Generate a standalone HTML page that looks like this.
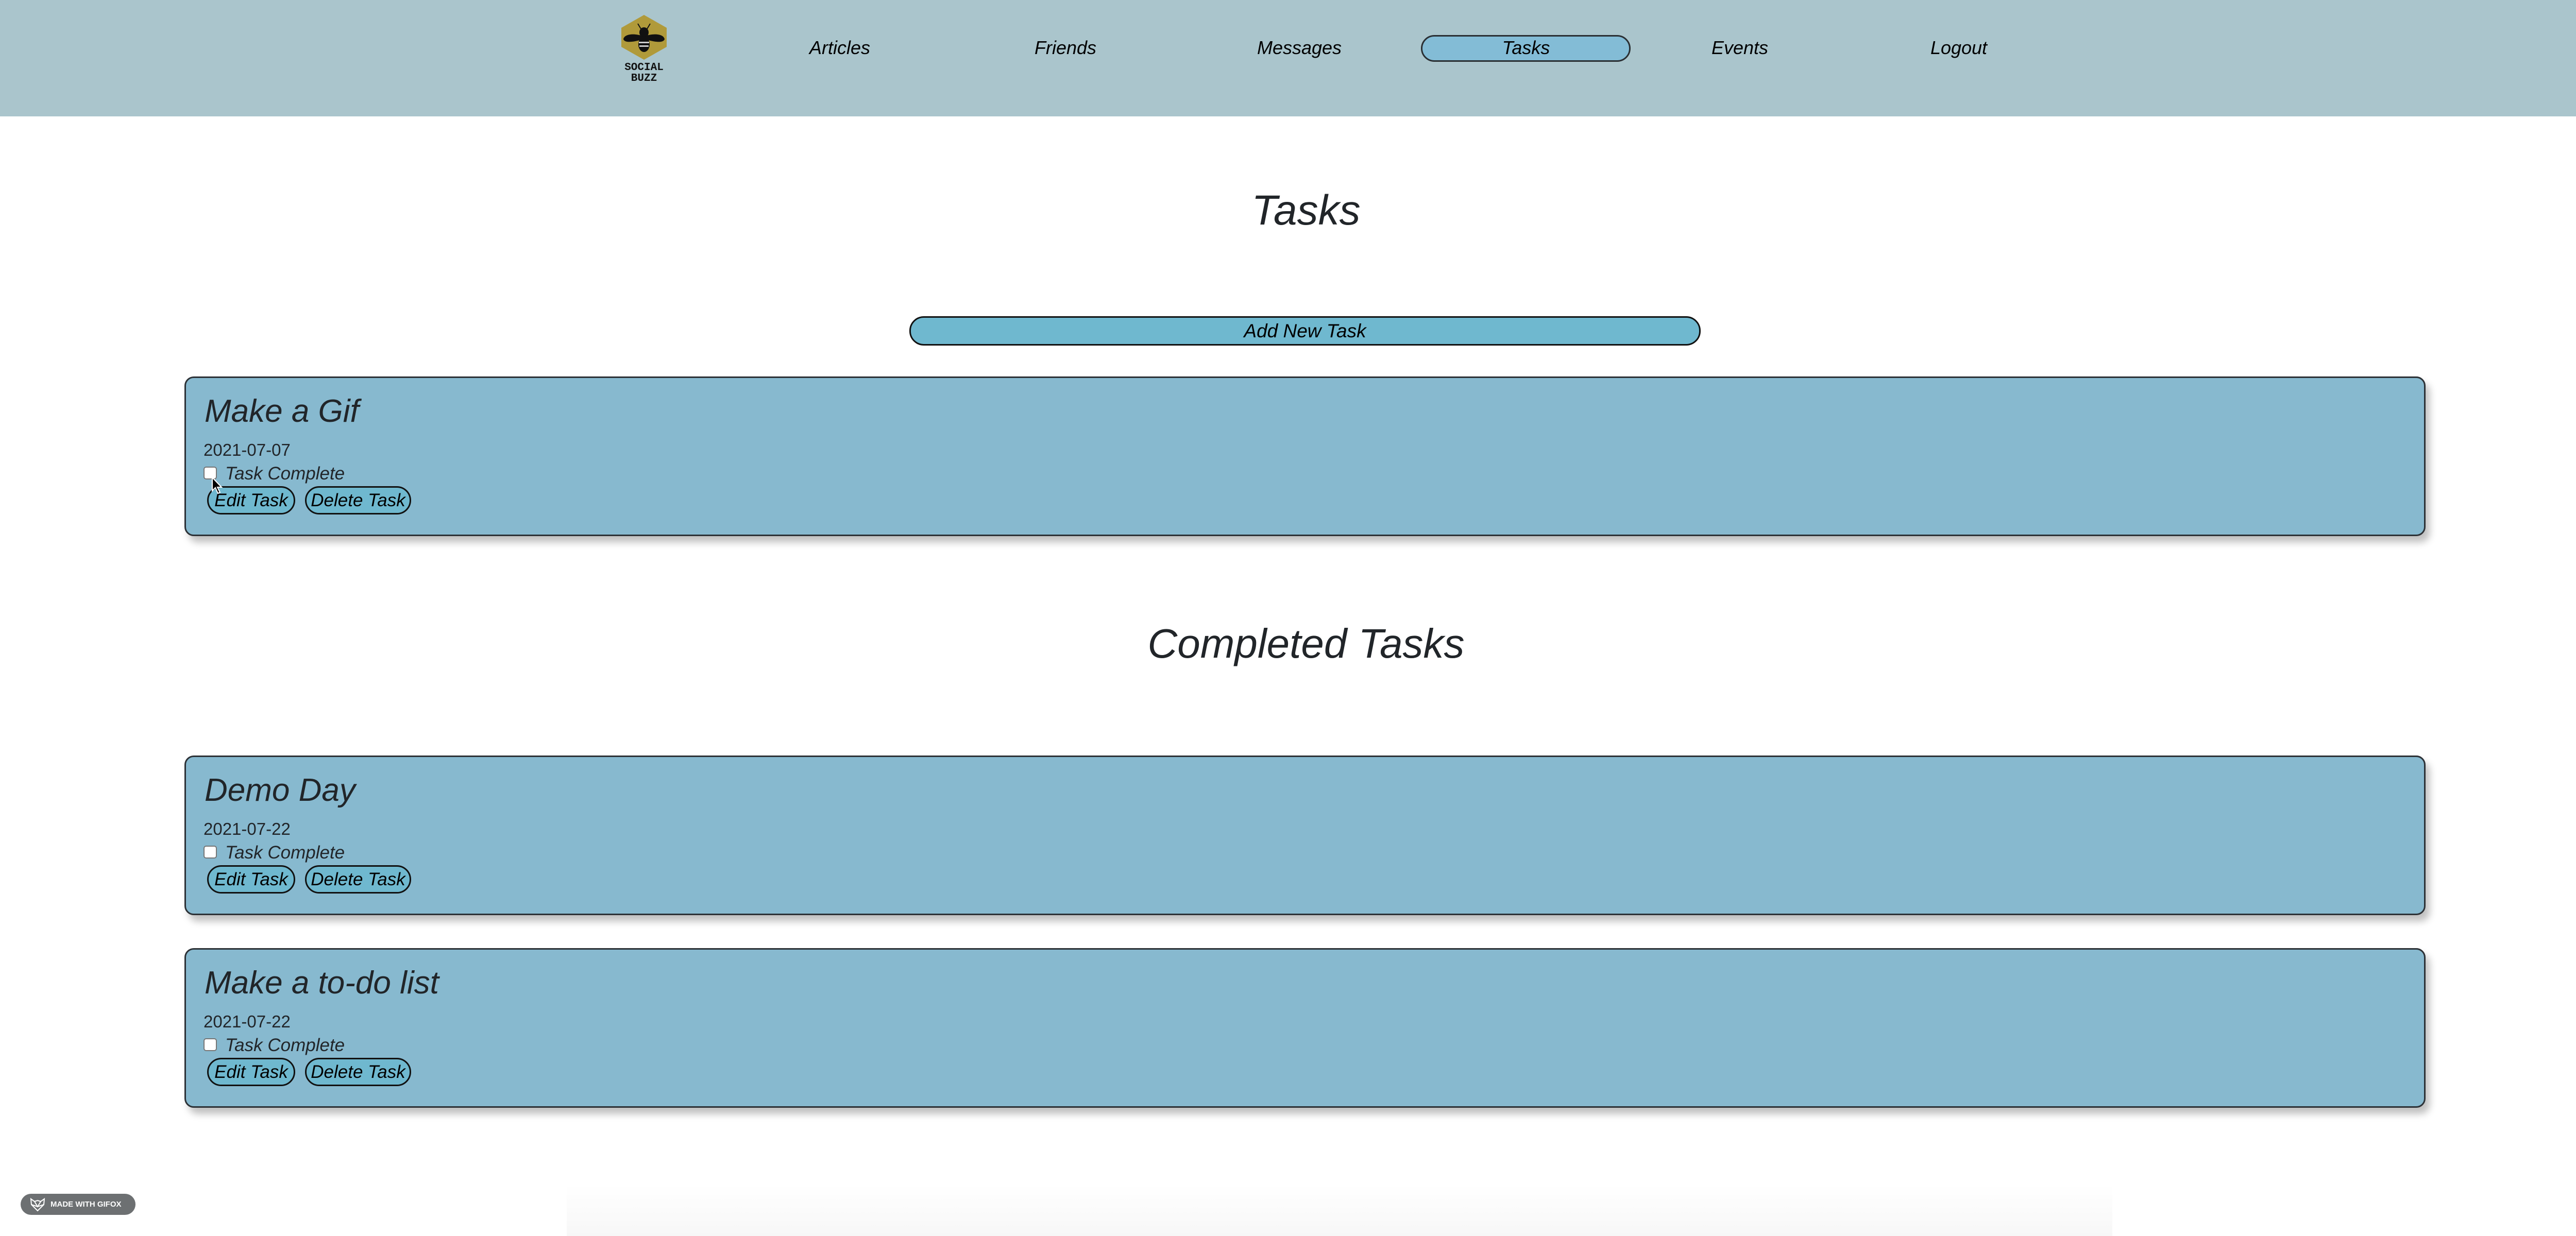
<!DOCTYPE html>
<html><head><meta charset="utf-8"><style>
*{margin:0;padding:0;box-sizing:border-box}
body{width:5070px;height:2400px;background:#fff;position:relative;overflow:hidden;font-family:"Liberation Sans",sans-serif;color:#212529}
.abs{position:absolute;white-space:nowrap;line-height:1}
.hdr{position:absolute;left:0;top:0;width:5070px;height:226px;background:#aac5cc}
.nav{position:absolute;top:75px;font-size:36px;font-style:italic;color:#000;line-height:1;transform:translateX(-50%)}
.pill{position:absolute;left:2758px;top:68px;width:407px;height:52px;border:3px solid #2a2f33;border-radius:26px;background:#83bcd6}
.card{position:absolute;left:358px;width:4350px;height:310px;background:#87b9cf;border:3px solid #2c3136;border-radius:18px;box-shadow:8px 12px 14px rgba(0,0,0,.25)}
.card .t{position:absolute;left:36px;top:34px;font-size:62px;font-style:italic;line-height:1}
.card .d{position:absolute;left:34px;top:123px;font-size:33px;line-height:1}
.card .cb{position:absolute;left:34px;top:172px;width:26px;height:25px;background:#fff;border:2px solid #767676;border-radius:5px}
.card .l{position:absolute;left:76px;top:168px;font-size:35px;font-style:italic;line-height:1}
.card .b{position:absolute;top:210px;height:55px;border:3px solid #111;border-radius:28px;background:#6fb8cf;font-size:35px;font-style:italic;color:#000;text-align:center;line-height:49px}
</style></head><body>
<div class="hdr"></div>
<svg class="abs" style="left:1200px;top:26px" width="100" height="135" viewBox="0 0 100 135">
<polygon points="50,3 94,28 94,65 50,90 6,65 6,28" fill="#b09a3a"/>
<ellipse cx="50" cy="37" rx="9" ry="10" fill="#111"/>
<path d="M44 30 L38 20 M56 30 L62 20" stroke="#111" stroke-width="2"/>
<path d="M48 44 C30 38 12 40 10 50 C12 58 30 56 48 50 Z M52 44 C70 38 88 40 90 50 C88 58 70 56 52 50 Z" fill="#111"/>
<ellipse cx="50" cy="60" rx="11" ry="15" fill="#111"/>
<rect x="40" y="55" width="20" height="3" fill="#ccc"/><rect x="41" y="62" width="18" height="3" fill="#ccc"/>
<text x="50" y="110" text-anchor="middle" font-family="Liberation Mono" font-weight="bold" font-size="21" fill="#111">SOCIAL</text>
<text x="50" y="131" text-anchor="middle" font-family="Liberation Mono" font-weight="bold" font-size="21" fill="#111">BUZZ</text>
</svg>
<div class="nav" style="left:1630px">Articles</div>
<div class="nav" style="left:2068px">Friends</div>
<div class="nav" style="left:2522px">Messages</div>
<div class="pill"></div>
<div class="nav" style="left:2962px">Tasks</div>
<div class="nav" style="left:3377px">Events</div>
<div class="nav" style="left:3802px">Logout</div>

<div class="abs" style="left:0;width:5070px;text-align:center;top:368px;font-size:82px;font-style:italic">Tasks</div>
<div class="abs" style="left:1765px;top:614px;width:1536px;height:57px;border:3px solid #111;border-radius:28px;background:#6fb8cf;text-align:center;font-size:37px;font-style:italic;line-height:51px;color:#000">Add New Task</div>

<div class="card" style="top:731px">
<div class="t">Make a Gif</div><div class="d">2021-07-07</div><div class="cb"></div><div class="l">Task Complete</div>
<div class="b" style="left:41px;width:171px">Edit Task</div><div class="b" style="left:231px;width:206px">Delete Task</div>
</div>
<svg class="abs" style="left:410px;top:925px" width="24" height="36" viewBox="0 0 24 36"><path d="M2 2 L2 28 L8 22 L13 33 L17 31 L12 21 L20 21 Z" fill="#000" stroke="#fff" stroke-width="2"/></svg>

<div class="abs" style="left:0;width:5070px;text-align:center;top:1210px;font-size:80px;font-style:italic">Completed Tasks</div>

<div class="card" style="top:1467px">
<div class="t">Demo Day</div><div class="d">2021-07-22</div><div class="cb"></div><div class="l">Task Complete</div>
<div class="b" style="left:41px;width:171px">Edit Task</div><div class="b" style="left:231px;width:206px">Delete Task</div>
</div>
<div class="card" style="top:1841px">
<div class="t">Make a to-do list</div><div class="d">2021-07-22</div><div class="cb"></div><div class="l">Task Complete</div>
<div class="b" style="left:41px;width:171px">Edit Task</div><div class="b" style="left:231px;width:206px">Delete Task</div>
</div>

<div class="abs" style="left:1100px;top:2300px;width:3000px;height:100px;background:linear-gradient(#fff,#f7f7f7)"></div>
<div class="abs" style="left:40px;top:2318px;width:223px;height:41px;border-radius:21px;background:#6d7072;color:#fff;font-weight:bold;font-size:15px;line-height:41px;padding-left:58px">MADE WITH GIFOX</div>
<svg class="abs" style="left:57px;top:2325px" width="32" height="28" viewBox="0 0 32 28"><path d="M3 3 L10 8 L16 6 L22 8 L29 3 L28 14 L16 26 L4 14 Z M10 8 L16 18 L22 8 M4 14 L16 18 L28 14" fill="none" stroke="#fff" stroke-width="2"/></svg>
</body></html>
